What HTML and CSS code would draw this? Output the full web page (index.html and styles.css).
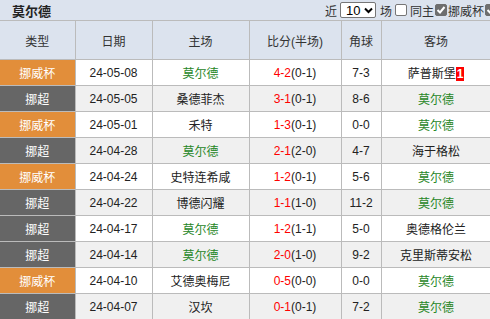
FILE: index.html
```html
<!DOCTYPE html>
<html>
<head>
<meta charset="utf-8">
<link rel="stylesheet" href="styles.css">
</head>
<body>
<div class="bar">
  <div class="title">莫尔德</div>
  <div class="ctrl">
    <span>近</span>
    <span class="sel">10<svg width="9" height="7" viewBox="0 0 9 7"><path d="M1 1.5 L4.5 5 L8 1.5" fill="none" stroke="#000" stroke-width="2"/></svg></span>
    <span>场</span>
    <span class="cb"></span>
    <span>同主</span>
    <span class="cb on"><svg width="12" height="12" viewBox="0 0 12 12"><path d="M2.5 6 L5 8.5 L9.5 3" fill="none" stroke="#fff" stroke-width="2"/></svg></span>
    <span>挪威杯</span>
    <span class="cb on"><svg width="12" height="12" viewBox="0 0 12 12"><path d="M2.5 6 L5 8.5 L9.5 3" fill="none" stroke="#fff" stroke-width="2"/></svg></span>
  </div>
</div>
<table class="tbl">
  <colgroup>
    <col class="c1"><col class="c2"><col class="c3"><col class="c4"><col class="c5"><col class="c6">
  </colgroup>
  <tr class="head"><th>类型</th><th>日期</th><th>主场</th><th>比分(半场)</th><th>角球</th><th>客场</th></tr>
  <tr><td class="cup">挪威杯</td><td>24-05-08</td><td class="g">莫尔德</td><td><span class="r">4-2</span>(0-1)</td><td>7-3</td><td>萨普斯堡<span class="badge">1</span></td></tr>
  <tr class="alt"><td class="lg">挪超</td><td>24-05-05</td><td>桑德菲杰</td><td><span class="r">3-1</span>(0-1)</td><td>8-6</td><td class="g">莫尔德</td></tr>
  <tr><td class="cup">挪威杯</td><td>24-05-01</td><td>禾特</td><td><span class="r">1-3</span>(0-1)</td><td>0-0</td><td class="g">莫尔德</td></tr>
  <tr class="alt"><td class="lg">挪超</td><td>24-04-28</td><td class="g">莫尔德</td><td><span class="r">2-1</span>(2-0)</td><td>4-7</td><td>海于格松</td></tr>
  <tr><td class="cup">挪威杯</td><td>24-04-24</td><td>史特连希咸</td><td><span class="r">1-2</span>(0-1)</td><td>5-6</td><td class="g">莫尔德</td></tr>
  <tr class="alt"><td class="lg">挪超</td><td>24-04-22</td><td>博德闪耀</td><td><span class="r">1-1</span>(1-0)</td><td>11-2</td><td class="g">莫尔德</td></tr>
  <tr><td class="lg">挪超</td><td>24-04-17</td><td class="g">莫尔德</td><td><span class="r">1-2</span>(1-1)</td><td>5-0</td><td>奥德格伦兰</td></tr>
  <tr class="alt"><td class="lg">挪超</td><td>24-04-14</td><td class="g">莫尔德</td><td><span class="r">2-0</span>(1-0)</td><td>9-2</td><td>克里斯蒂安松</td></tr>
  <tr><td class="cup">挪威杯</td><td>24-04-10</td><td>艾德奥梅尼</td><td><span class="r">0-5</span>(0-0)</td><td>0-0</td><td class="g">莫尔德</td></tr>
  <tr class="alt"><td class="lg">挪超</td><td>24-04-07</td><td>汉坎</td><td><span class="r">0-1</span>(0-1)</td><td>7-2</td><td class="g">莫尔德</td></tr>
</table>
</body>
</html>
```
FILE: styles.css
```css
html, body {
  margin: 0;
  padding: 0;
  background: #fff;
  font-family: "Liberation Sans", "Noto Sans CJK SC", sans-serif;
  font-size: 12px;
  color: #222;
  overflow: hidden;
}
.bar {
  height: 21px;
  background: #dce3ee;
  display: flex;
  align-items: center;
  justify-content: space-between;
  border-bottom: 1px solid #bbb;
  box-sizing: border-box;
}
.title {
  padding-left: 12px;
  font-weight: bold;
  font-size: 13px;
  color: #222;
}
.ctrl {
  display: flex;
  align-items: center;
  font-size: 12px;
  color: #333;
  white-space: nowrap;
  margin-right: -8px;
}
.sel {
  display: inline-flex;
  align-items: center;
  gap: 4px;
  height: 16px;
  width: 36px;
  box-sizing: border-box;
  padding-left: 5px;
  border: 1px solid #767676;
  border-radius: 2px;
  background: #fff;
  font-size: 13px;
  color: #000;
  margin: 0 4px 0 3px;
}
.cb {
  display: inline-block;
  width: 12px;
  height: 12px;
  box-sizing: border-box;
  border: 1px solid #767676;
  border-radius: 2px;
  background: #fff;
  margin: 0 3px 0 3px;
}
.cb.on {
  background: #6e6e6e;
  border-color: #6e6e6e;
  position: relative;
  margin: 0 1px 0 1px;
}
.cb.on svg {
  position: absolute;
  left: -1px;
  top: -1px;
}
.tbl {
  border-collapse: collapse;
  width: 491px;
  table-layout: fixed;
}
.c1 { width: 75px; }
.c2 { width: 77px; }
.c3 { width: 97px; }
.c4 { width: 92px; }
.c5 { width: 40px; }
.c6 { width: 110px; }
.tbl th, .tbl td {
  border: 1px solid #bbb;
  text-align: center;
  padding: 0;
  white-space: nowrap;
  overflow: hidden;
}
.tbl th {
  height: 38px;
  background: #dce3ee;
  font-weight: normal;
  color: #333;
  font-size: 12px;
  border-top: none;
}
.tbl td {
  height: 25px;
  background: #fff;
  color: #222;
}
.tbl tr.alt td { background: #f0f0f0; }
.tbl td.cup { background: #e28e3a; color: #fff; }
.tbl td.lg { background: #666; color: #fff; }
.tbl tr.alt td.cup { background: #e28e3a; }
.tbl tr.alt td.lg { background: #666; }
.tbl th:first-child, .tbl td:first-child { border-left: none; }
.g { color: #1f861f !important; }
.r { color: #f00; }
.badge {
  display: inline-block;
  background: #f00;
  color: #fff;
  font-weight: bold;
  padding: 0 1px;
  line-height: 14px;
}
```
